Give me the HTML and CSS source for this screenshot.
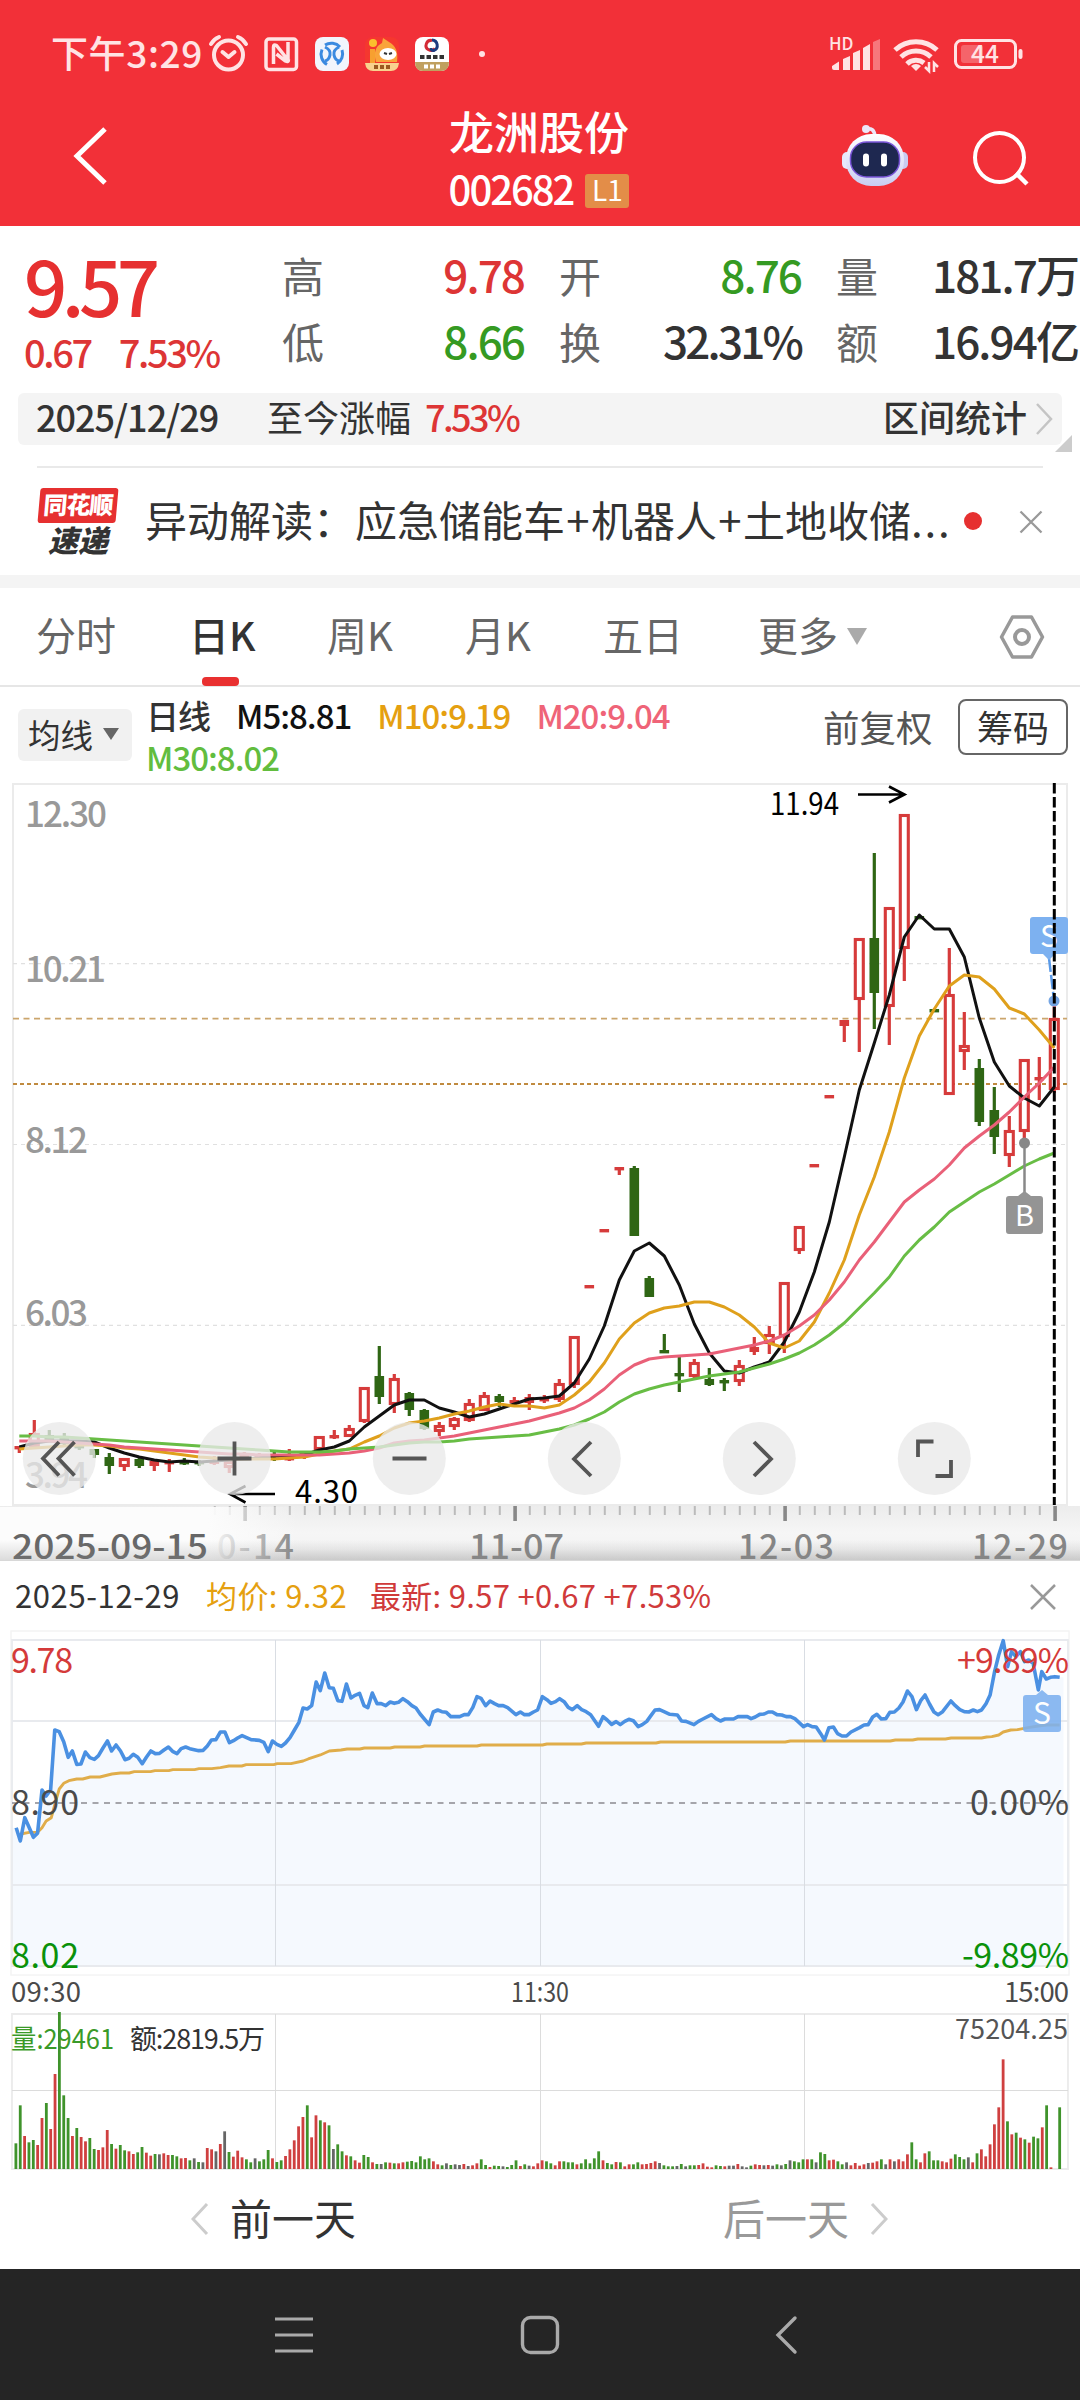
FILE: index.html
```
<!DOCTYPE html>
<html lang="zh-CN">
<head>
  <meta charset="UTF-8">
  <title>龙洲股份 002682</title>
  <link rel="stylesheet" href="styles.css">
</head>
<body>

  <header class="top">
    <div class="status">
      <span class="hora">下午3:29</span>
      <svg class="status-left" width="284" height="40" viewBox="206 34 284 40">
        <!-- alarma -->
        <g fill="none" stroke="#ffe3e4" stroke-width="4" stroke-linecap="round" stroke-linejoin="round">
          <circle cx="228.500" cy="55" r="14.500"/>
          <path d="M222.500 52l6 5 6-5M211 44q3-5 8-7M246 44q-3-5-8-7"/>
        </g>
        <!-- NFC -->
        <g fill="none" stroke="#ffe3e4" stroke-width="3.500" stroke-linejoin="round">
          <rect x="266" y="39" width="30.500" height="30.500" rx="3"/>
          <path d="M273.500 64V47q0-3 3-1.500L288 60V42M288.500 59.500q0 3-3 1.500l-9-7" />
        </g>
        <rect x="315" y="37" width="34" height="34" rx="8" fill="#f1f5fc"/>
        <g fill="none" stroke="#3a8ae0" stroke-width="3">
          <path d="M325 45a12 12 0 0 1 15 2M342 50a12 12 0 0 1-5 14M327 64.500a12 12 0 0 1-5-15"/>
          <path d="M325 47q6 3 5 8-1 5-5 6M339 47q-6 3-5 8 1 5 5 6"/>
        </g>
        <rect x="365" y="37" width="34" height="34" rx="8" fill="#f5372f"/>
        <path d="M376 62q-4-14 6-19l1-5 6 4q10 5 8 20z" fill="#f9a43a"/>
        <circle cx="373" cy="43" r="4" fill="#fbc02d"/>
        <path d="M370 49h5v14h-5z" fill="#f7a030"/>
        <ellipse cx="388" cy="54" rx="8.500" ry="6" fill="#fff"/>
        <path d="M384 53l3 1M392 53l-3 1" stroke="#333" stroke-width="2"/>
        <path d="M365 63h34q-1 8-8 8h-18q-7 0-8-8z" fill="#f8d28e"/>
        <path d="M374 67h16" stroke="#9a5a20" stroke-width="4" stroke-dasharray="4 2"/>
        <rect x="415" y="37" width="34" height="34" rx="8" fill="#fff"/>
        <path d="M415 62h34q0 9-8 9h-18q-8 0-8-9z" fill="#c0a060"/>
        <path d="M432 40.500a5 5 0 1 0 3 8" fill="none" stroke="#d42a35" stroke-width="3"/>
        <path d="M432 40a5.500 5.500 0 0 1 2 10.500q-3 .5-3-2.500" fill="none" stroke="#1c3b80" stroke-width="3"/>
        <path d="M420 57h24" stroke="#333" stroke-width="4" stroke-dasharray="4.500 2"/>
        <path d="M424 66.500h16" stroke="#fff" stroke-width="4" stroke-dasharray="4 2"/>
        <circle cx="482" cy="54" r="3" fill="#ffe3e4"/>
      </svg>
      <svg class="status-right" width="200" height="40" viewBox="826 34 200 40">
        <text x="829" y="50" font-size="17" font-weight="500" fill="#ffe3e4">HD</text>
        <g fill="#ffe3e4">
          <path d="M832 66l7-4.500v8.500h-5q-2 0-2-2zM843 59l7-3v14h-7zM853 53l7-3v20h-7zM863 48l7-4v26h-7z"/>
          <path d="M873 42l7-3v31h-7z" opacity=".4"/>
        </g>
        <g fill="none" stroke="#ffe3e4" stroke-width="5">
          <path d="M895 50a31 31 0 0 1 42 0M901 57a22 22 0 0 1 30 0M907 64a13 13 0 0 1 17-1"/>
        </g>
        <path d="M911 66q5-4 10 0l-5 5z" fill="#ffe3e4"/>
        <path d="M929 62v9l-4-4M934 72v-9l4 4" fill="none" stroke="#ffe3e4" stroke-width="2.500"/>
        <rect x="955.500" y="40.500" width="60" height="27" rx="6" fill="none" stroke="#ffe3e4" stroke-width="3"/>
        <rect x="961" y="45" width="22" height="18" rx="3" fill="#fff" opacity=".25"/>
        <path d="M1020.500 51v6" stroke="#ffe3e4" stroke-width="4" stroke-linecap="round"/>
        <text x="971" y="63" font-size="24.500" font-weight="500" fill="#ffe3e4">44</text>
      </svg>
    </div>

    <div class="navbar">
      <svg width="40" height="64" viewBox="0 0 40 64"><path d="M34 4L6 31l28 27" fill="none" stroke="#fff" stroke-width="5"/></svg>
      <div class="titulo">
        <h1>龙洲股份</h1>
        <div class="codigo"><span>002682</span><b>L1</b></div>
      </div>
      <div class="acciones">
        <svg width="68" height="64" viewBox="841 127 68 64">
          <defs>
            <linearGradient id="cabeza" x1="0" y1="0" x2="0" y2="1"><stop offset="0" stop-color="#fff"/><stop offset="1" stop-color="#c9cdf2"/></linearGradient>
          </defs>
          <path d="M866 131q8-2 9 7v5" fill="none" stroke="#ece6f8" stroke-width="3.500"/>
          <circle cx="866" cy="131" r="4" fill="#ece6f8"/>
          <rect x="842" y="154" width="12" height="17" rx="5" fill="#e6e8fb"/>
          <rect x="896" y="154" width="12" height="17" rx="5" fill="#c9ccf0"/>
          <rect x="846" y="136" width="58" height="52" rx="25" fill="url(#cabeza)"/>
          <rect x="850.500" y="144" width="49" height="35" rx="16" fill="#1e2850" stroke="#7a55d8" stroke-width="1.500"/>
          <path d="M866 158.500v7M884 158.500v7" stroke="#fff" stroke-width="6" stroke-linecap="round"/>
        </svg>
        <svg width="60" height="60" viewBox="971 128 60 60"><circle cx="999.500" cy="158.500" r="24.500" fill="none" stroke="#fff" stroke-width="4"/><path d="M1016 174l11 11" stroke="#fff" stroke-width="4.500"/></svg>
      </div>
    </div>
  </header>

  <section class="cotizacion">
    <div class="precio">
      <div class="actual">9.57</div>
      <div class="cambio"><span>0.67</span><span>7.53%</span></div>
    </div>
    <dl class="datos">
      <div><dt>高</dt><dd class="rojo">9.78</dd></div>
      <div><dt>开</dt><dd class="verde">8.76</dd></div>
      <div><dt>量</dt><dd>181.7万</dd></div>
      <div><dt>低</dt><dd class="verde">8.66</dd></div>
      <div><dt>换</dt><dd class="cambio-pct">32.31%</dd></div>
      <div><dt>额</dt><dd>16.94亿</dd></div>
    </dl>
  </section>

  <div class="rango">
    <span class="fecha">2025/12/29</span>
    <span class="desde">至今涨幅</span>
    <span class="pct">7.53%</span>
    <span class="stats">区间统计</span>
    <svg width="20" height="36" viewBox="0 0 20 36"><path d="M2 3l14 15L2 33" fill="none" stroke="#c4c4c4" stroke-width="2.500"/></svg>
    <i class="esquina"></i>
  </div>

  <div class="noticia">
    <div class="logo"><b>同花顺</b><em>速递</em></div>
    <p>异动解读：应急储能车<i>+</i>机器人<i>+</i>土地收储<u>...</u></p>
    <span class="punto"></span>
    <svg width="24" height="24" viewBox="0 0 24 24"><path d="M1.500 1.500l21 21M22.500 1.500l-21 21" stroke="#999" stroke-width="2.300"/></svg>
  </div>

  <nav class="tabs">
    <a>分时</a>
    <a class="activo">日K</a>
    <a>周K</a>
    <a>月K</a>
    <a>五日</a>
    <a class="mas">更多<i></i></a>
    <svg width="48" height="48" viewBox="0 0 48 48" fill="none" stroke="#999"><path d="M14.500 4h19L44.500 24 33.500 44h-19L3.500 24z" stroke-width="3.500" stroke-linejoin="round"/><circle cx="24" cy="24" r="7" stroke-width="4"/></svg>
  </nav>

  <div class="medias">
    <div class="selector">均线<i></i></div>
    <div class="valores">
      <span class="m0">日线</span><span class="m5">M5:8.81</span><span class="m10">M10:9.19</span><span class="m20">M20:9.04</span><span class="m30">M30:8.02</span>
    </div>
    <span class="ajuste">前复权</span>
    <button>筹码</button>
  </div>

  <svg class="grafica" width="1080" height="777" viewBox="0 783 1080 777">
    <defs>
      <linearGradient id="eje" x1="0" y1="0" x2="0" y2="1"><stop offset="0" stop-color="#ececec"/><stop offset=".5" stop-color="#f6f6f6"/><stop offset=".8" stop-color="#f3f3f3"/><stop offset="1" stop-color="#e4e4e4"/></linearGradient>
      <linearGradient id="velo"><stop offset="0" stop-color="#fcfcfc"/><stop offset=".3" stop-color="#fcfcfc" stop-opacity=".7"/><stop offset="1" stop-color="#fcfcfc" stop-opacity="0"/></linearGradient>
      <linearGradient id="sombra" x1="0" y1="0" x2="0" y2="1"><stop offset="0" stop-color="#888" stop-opacity="0"/><stop offset="1" stop-color="#888" stop-opacity=".28"/></linearGradient>
    </defs>
    <rect x="13" y="784" width="1054" height="721" fill="none" stroke="#ebebeb" stroke-width="2"/>
    <path d="M13 963.700H1067M13 1144.500H1067M13 1325.300H1067" stroke="#e0e0e0" stroke-width="1.200" stroke-dasharray="4 4"/>
    <path d="M13 1018.700H1067" stroke="#cba56c" stroke-width="1.800" stroke-dasharray="6 4.500"/>
    <path d="M13 1084H1067" stroke="#c08a3f" stroke-width="2" stroke-dasharray="4 3"/>
    <g class="precios">
      <text x="25" y="827" textLength="82">12.30</text>
      <text x="25" y="982" textLength="81">10.21</text>
      <text x="25" y="1153" textLength="63">8.12</text>
      <text x="25" y="1326" textLength="63">6.03</text>
      <text x="25" y="1488" textLength="63">3.94</text>
    </g>
    <g id="velas"></g>
    <g id="lineas" fill="none" stroke-width="3" stroke-linejoin="round"></g>

    <!-- maximo y minimo -->
    <g fill="none" stroke="#000" stroke-width="2.600">
      <path d="M858 794.500h46M889 786.500l15.500 8-15.500 8"/>
      <path d="M275 1494h-44M245.500 1486l-15.500 8 15.500 8.500"/>
    </g>
    <text class="marca" x="770" y="815" textLength="69" lengthAdjust="spacingAndGlyphs">11.94</text>
    <text class="marca" x="295" y="1502.500" textLength="63">4.30</text>

    <!-- venta y compra -->
    <path d="M1049 958l5 42" stroke="#5a9ae8" stroke-width="2.500" stroke-dasharray="14 3"/>
    <circle cx="1054" cy="1001" r="5.500" fill="#74a5e4"/>
    <path d="M1033 917h32q3 0 3 3v31q0 3-3 3h-10l-6 6-6-6h-10q-3 0-3-3v-31q0-3 3-3z" fill="#7db1f0"/>
    <text x="1049" y="947" font-size="30" fill="#fff" text-anchor="middle">S</text>
    <path d="M1024.500 1143v52" stroke="#888" stroke-width="2.500"/>
    <circle cx="1024.500" cy="1143" r="5.500" fill="#888"/>
    <path d="M1009 1196h9l6.500-5 6.500 5h9q3 0 3 3v32q0 3-3 3h-31q-3 0-3-3v-32q0-3 3-3z" fill="#949494"/>
    <text x="1024.500" y="1225.500" font-size="29" fill="#fff" text-anchor="middle">B</text>
    <path d="M1054.300 783V1505" stroke="#000" stroke-width="3" stroke-dasharray="10.500 3.500"/>

    <!-- botones -->
    <g fill="#e9e9e9" fill-opacity=".78">
      <circle cx="59.300" cy="1458.500" r="36.500"/><circle cx="234.300" cy="1458.500" r="36.500"/><circle cx="409.300" cy="1458.500" r="36.500"/>
      <circle cx="584.300" cy="1458.500" r="36.500"/><circle cx="759.300" cy="1458.500" r="36.500"/><circle cx="934.300" cy="1458.500" r="36.500"/>
    </g>
    <g fill="none" stroke="#555" stroke-width="3.800">
      <path d="M59 1442l-16 16.500 16 17M74.500 1442l-16 16.500 16 17"/>
      <path d="M217.500 1458.500h34M234.500 1441.500v34M392.500 1458.500h34"/>
      <path d="M591 1442l-17 17 17 17M754 1442l17 17-17 17"/>
      <path d="M918 1457v-15.500h15.500M951 1460v16h-15.500"/>
    </g>

    <!-- eje de fechas -->
    <rect x="0" y="1506" width="1080" height="54" fill="url(#eje)"/>
    <g id="ticks"></g>
    <g class="fechas">
      <text x="217" y="1559" textLength="77">0-14</text>
      <text x="469" y="1559" textLength="95" lengthAdjust="spacingAndGlyphs">11-07</text>
      <text x="738" y="1559" textLength="96">12-03</text>
      <text x="972" y="1559" textLength="96">12-29</text>
    </g>
    <rect x="0" y="1507" width="208" height="53" fill="#fcfcfc"/>
    <rect x="208" y="1507" width="90" height="53" fill="url(#velo)"/>
    <text class="inicio" x="12" y="1559" textLength="196" lengthAdjust="spacingAndGlyphs">2025-09-15</text>
    <rect x="0" y="1540" width="1080" height="20" fill="url(#sombra)"/>
  </svg>

  <section class="dia">
    <div class="dia-top">
      <span class="d1">2025-12-29</span>
      <span class="d2">均价: 9.32</span>
      <span class="d3">最新: 9.57 +0.67 +7.53%</span>
      <svg width="26" height="26" viewBox="0 0 26 26"><path d="M1 1l24 24M25 1L1 25" stroke="#999" stroke-width="2.500"/></svg>
    </div>
    <svg class="minutos" width="1080" height="549" viewBox="0 1630 1080 549">
      <g fill="none" stroke="#f4f4f4" stroke-width="1.500"><rect x="11" y="1631" width="1058" height="344"/></g>
      <g transform="translate(0 1560) scale(.34439 .33333)">
        <path id="area" fill="#f5f9fe"/>
      </g>
      <g fill="none" stroke="#e8eaee" stroke-width="1.800">
        <path d="M12 1640H1068V1966H12zM12 1721H1068M12 1885H1068"/>
      </g>
      <path d="M275.500 1640V1966M540.500 1640V1966M804.500 1640V1966" stroke="#d9dde3" stroke-width="1"/>
      <path d="M12 1803H1068" stroke="#a5a5ab" stroke-width="1.800" stroke-dasharray="6 5.500"/>
      <g transform="translate(0 1560) scale(.34439 .33333)" fill="none" stroke-linejoin="round">
        <polyline id="media" stroke="#e0ad4a" stroke-width="2.900" vector-effect="non-scaling-stroke"/>
        <polyline id="precio" stroke="#4a90e2" stroke-width="3.600" vector-effect="non-scaling-stroke"/>
      </g>
      <g class="escala">
        <text x="11" y="1673" fill="#d43a3a" textLength="62">9.78</text>
        <text x="11" y="1815" fill="#4a4a4a" textLength="68">8.90</text>
        <text x="11" y="1968" fill="#0a910a" textLength="68">8.02</text>
        <text x="957" y="1673" fill="#d43a3a" textLength="112">+9.89%</text>
        <text x="970" y="1815" fill="#4a4a4a" textLength="99">0.00%</text>
        <text x="962" y="1968" fill="#0a910a" textLength="107">-9.89%</text>
      </g>
      <g opacity=".88">
        <path d="M1026 1695h10l6-5 6 5h10q3 0 3 3v31q0 3-3 3h-32q-3 0-3-3v-31q0-3 3-3z" fill="#7db1f0"/>
        <text x="1042" y="1724" font-size="30" fill="#fff" text-anchor="middle">S</text>
      </g>
      <g class="horas">
        <text x="11" y="2002" textLength="70">09:30</text>
        <text x="511" y="2002" textLength="58" lengthAdjust="spacingAndGlyphs">11:30</text>
        <text x="1004" y="2002" textLength="65">15:00</text>
      </g>
      <path d="M12 2014H1068V2169H12z" fill="none" stroke="#ebebeb" stroke-width="1.800"/>
      <path d="M12 2090.500H1068M275.500 2014V2169M540.500 2014V2169M804.500 2014V2169" stroke="#dcdcdc" stroke-width="1"/>
      <text x="11" y="2049" font-size="27" fill="#3a9a28" textLength="103" lengthAdjust="spacingAndGlyphs">量:29461</text>
      <text x="130" y="2049" font-size="27" fill="#333" textLength="135">额:2819.5万</text>
      <text x="955" y="2039" font-size="27" fill="#555" textLength="113">75204.25</text>
      <g id="volumen"></g>
    </svg>
    <div class="dia-nav">
      <a class="prev"><svg width="18" height="34" viewBox="0 0 18 34"><path d="M16 2L2 17l14 15" fill="none" stroke="#ccc" stroke-width="3"/></svg>前一天</a>
      <a class="next">后一天<svg width="18" height="34" viewBox="0 0 18 34"><path d="M2 2l14 15L2 32" fill="none" stroke="#ccc" stroke-width="3"/></svg></a>
    </div>
  </section>

  <footer class="sistema">
    <svg width="40" height="40" viewBox="0 0 40 40"><path d="M1 4h38M1 20h38M1 36h38" stroke="#aaa" stroke-width="3"/></svg>
    <svg width="40" height="40" viewBox="0 0 40 40"><rect x="2.500" y="2.500" width="35" height="35" rx="8" fill="none" stroke="#aaa" stroke-width="3.400"/></svg>
    <svg width="40" height="40" viewBox="0 0 40 40"><path d="M29 3L12 20l17 17" fill="none" stroke="#aaa" stroke-width="3.400" stroke-linecap="round"/></svg>
  </footer>

  <script src="script.js"></script>
</body>
</html>
```

FILE: styles.css
```
* {
  box-sizing: border-box;
}
body {
  margin: 0;
  width: 1080px;
  height: 2400px;
  overflow: hidden;
  background: #fff;
  color: #333;
  font-family: "Noto Sans CJK SC", sans-serif;
}
svg {
  display: block;
  flex: none;
}

/* cabecera */
.top {
  height: 226px;
  background: #f23038;
  color: #fff;
}
.status {
  display: flex;
  align-items: center;
  height: 96px;
  padding: 12px 54px 0 51px;
}
.hora {
  width: 155px;
  font-size: 37px;
  line-height: 54px;
  margin-top: -5px;
  letter-spacing: 0.6px;
  color: #ffe3e4;
  white-space: nowrap;
  font-weight: 500;
}
.status-right {
  margin-left: auto;
}
.navbar {
  display: grid;
  grid-template-columns: 1fr 200px 1fr;
  height: 122px;
  padding: 0 49px 0 71px;
  align-items: center;
}
.titulo {
  width: 200px;
  margin-left: -12px;
  padding-top: 1px;
  text-align: center;
}
h1 {
  margin: 0;
  font-size: 45px;
  line-height: 66px;
  font-weight: 500;
}
.codigo {
  display: flex;
  justify-content: center;
  align-items: center;
  gap: 12px;
  height: 54px;
}
.codigo span {
  font-size: 40px;
  line-height: 58px;
  font-weight: 500;
  letter-spacing: -2px;
  margin-top: -5px;
}
.codigo b {
  width: 44px;
  height: 34px;
  border-radius: 3px;
  background: #e38d48;
  font-size: 28px;
  line-height: 30px;
  font-weight: 400;
}
.acciones {
  display: flex;
  justify-content: flex-end;
  gap: 62px;
}
.acciones svg + svg {
  margin-top: 2px;
}

/* cotizacion */
.cotizacion {
  display: flex;
  height: 167px;
  padding: 17px 2px 0 24px;
}
.precio {
  width: 258px;
  color: #e63030;
}
.actual {
  height: 82px;
  font-size: 76px;
  line-height: 82px;
  font-weight: 500;
  letter-spacing: -5.5px;
}
.cambio {
  display: flex;
  gap: 28px;
  font-size: 38px;
  line-height: 54px;
  margin-top: 0;
  letter-spacing: -2.4px;
  font-weight: 500;
  color: #dd3535;
}
.datos {
  display: grid;
  grid-template-columns: 242px 242px 242px;
  grid-auto-rows: 66px;
  column-gap: 35px;
  margin: 0;
}
.datos div {
  display: flex;
  justify-content: space-between;
  line-height: 63px;
}
dt {
  font-size: 42px;
  color: #666;
}
dd {
  margin: 0;
  font-size: 44px;
  font-weight: 500;
  letter-spacing: -1.9px;
}
.cambio-pct {
  letter-spacing: -2.8px;
}
.rojo {
  color: #dd3535;
}
.verde {
  color: #359a22;
}

.rango {
  position: relative;
  display: flex;
  align-items: center;
  height: 52px;
  margin: 0 18px;
  padding: 0 7px 0 18px;
  background: #f4f4f4;
  border-radius: 6px;
  font-size: 36px;
  line-height: 52px;
}
.rango span {
  margin-top: -6px;
}
.fecha {
  width: 231px;
  letter-spacing: -1px;
  font-weight: 500;
}
.rango .pct {
  margin-left: 14px;
  color: #dd3535;
  letter-spacing: -2.6px;
  font-weight: 500;
}
.stats {
  margin-left: auto;
  margin-right: 8px;
  font-weight: 500;
}
.esquina {
  position: absolute;
  right: -10px;
  bottom: -7px;
  border-left: 17px solid transparent;
  border-bottom: 17px solid #ccc;
}

/* noticia */
.noticia {
  display: flex;
  align-items: center;
  height: 109px;
  margin: 21px 37px 0;
  border-top: 2px solid #e9e9e9;
}
.logo {
  width: 82px;
  height: 68px;
  text-align: center;
}
.logo b {
  display: block;
  width: 78px;
  height: 35px;
  margin-left: 2px;
  background: #e63030;
  border-radius: 3px;
  color: #fff;
  font-size: 24px;
  line-height: 31px;
  font-weight: 900;
  letter-spacing: -1px;
  transform: skewX(-5deg);
}
.logo em {
  display: block;
  font-size: 30px;
  line-height: 33px;
  font-weight: 900;
}
.noticia p {
  margin: -5px 0 0 26px;
  width: 808px;
  font-size: 42px;
  line-height: 62px;
  white-space: nowrap;
}
.noticia p i {
  font-style: normal;
  display: inline-block;
  width: 26px;
  text-align: center;
}
.noticia p u {
  text-decoration: none;
  letter-spacing: 1.8px;
}
.punto {
  width: 18px;
  height: 18px;
  margin: -1px 37px 0 12px;
  border-radius: 50%;
  background: #e63030;
  flex: none;
}

/* pestañas */
.tabs {
  display: flex;
  align-items: center;
  height: 112px;
  border-top: 13px solid #f4f4f4;
  border-bottom: 2px solid #e6e6e6;
  padding: 0 34px 0 36px;
  font-size: 40px;
  color: #666;
}
.tabs a {
  position: relative;
  width: 138px;
  line-height: 60px;
  margin-top: -6px;
}
.tabs a:first-child {
  width: 153px;
}
.tabs a:nth-child(5) {
  width: 155px;
}
.tabs .mas {
  flex: 1;
}
.mas i {
  display: inline-block;
  margin: 0 0 6px 9px;
  border: 10px solid transparent;
  border-top: 17px solid #aaa;
  border-bottom: 0;
}
.tabs .activo {
  color: #333;
  font-weight: 500;
}
.activo::after {
  content: "";
  position: absolute;
  left: 13px;
  bottom: -22px;
  width: 37px;
  height: 9px;
  border-radius: 4px;
  background: #e93030;
}
.tabs svg {
  margin-top: 1px;
}

/* medias moviles */
.medias {
  display: flex;
  height: 96px;
  padding: 12px 12px 0 18px;
}
.selector {
  display: flex;
  align-items: center;
  gap: 10px;
  width: 114px;
  height: 52px;
  margin-top: 10px;
  padding: 0 0 3px 10px;
  background: #f1f1f1;
  border-radius: 6px;
  font-size: 32.500px;
  line-height: 48px;
}
.selector i {
  border: 8px solid transparent;
  border-top: 12px solid #666;
  border-bottom: 0;
}
.valores {
  display: flex;
  flex-wrap: wrap;
  width: 672px;
  padding: 0 90px 0 14px;
  font-size: 33px;
  line-height: 42px;
  height: 84px;
  margin-top: -5px;
  font-weight: 500;
  letter-spacing: -1px;
}
.valores span {
  margin-right: 26px;
}
.m5 {
  color: #111;
}
.m10 {
  color: #e5a010;
}
.m20 {
  color: #ef6478;
}
.m30 {
  color: #62bd3e;
}
.ajuste {
  margin: 2px 0 0 19px;
  width: 120px;
  font-size: 36.500px;
  line-height: 52px;
  color: #555;
}
.medias button {
  margin-left: auto;
  width: 110px;
  height: 56px;
  margin-top: 0;
  padding: 0 0 5px;
  border: 2px solid #666;
  border-radius: 8px;
  background: #fff;
  color: #333;
  font: 36px/50px "Noto Sans CJK SC", sans-serif;
}

/* grafica K */
.grafica {
  height: 777px;
}
.precios text {
  font-size: 35px;
  font-weight: 500;
  fill: #999;
}
.marca {
  font-size: 31px;
}
.fechas text {
  font-size: 34px;
  fill: #858585;
  font-weight: 500;
}
.inicio {
  font-size: 34px;
  font-weight: 500;
  fill: #666;
}

/* hoja del dia */
.dia {
  height: 709px;
  background: #fff;
  border-top: 1px solid #d8d8d8;
}
.dia-top {
  display: flex;
  align-items: center;
  height: 69px;
  padding: 3px 24px 0 15px;
  font-size: 31px;
  line-height: 46px;
}
.dia-top span {
  margin-top: -5px;
  white-space: nowrap;
}
.d1 {
  width: 191px;
  letter-spacing: 0.6px;
}
.d2 {
  width: 164px;
  color: #e5a010;
  letter-spacing: 0.4px;
}
.d3 {
  color: #d03a3a;
  letter-spacing: 0.3px;
}
.dia-top svg {
  margin-left: auto;
}
.escala text {
  font-size: 34px;
}
.horas text {
  font-size: 27.500px;
  fill: #4a4a4a;
}
.dia-nav {
  display: flex;
  align-items: center;
  height: 84px;
  padding-left: 191px;
  font-size: 42px;
  line-height: 62px;
}
.dia-nav a {
  display: flex;
  align-items: center;
  gap: 21px;
  padding-bottom: 9px;
}
.prev {
  width: 532px;
}
.next {
  color: #999;
}
.dia-nav svg {
  margin-top: 5px;
}

.sistema {
  display: flex;
  justify-content: center;
  align-items: center;
  gap: 206px;
  height: 131px;
  padding-right: 1px;
  background: #252525;
}
```

FILE: script.js
```
const NS = "http://www.w3.org/2000/svg";
const ROJO = "#d63b3b";
const VERDE = "#2f6614";

function agregar(padre, tipo, attrs) {
  const el = document.createElementNS(NS, tipo);
  for (const k in attrs) el.setAttribute(k, attrs[k]);
  document.getElementById(padre).appendChild(el);
}

const xVela = i => 19.3 + 15 * i;

// color, cuerpo arriba, cuerpo abajo, mecha arriba, mecha abajo
const velas = [
  ["r",1446,1448,1446,1453],["r",1433,1447,1420,1447],["g",1435,1440,1430,1442],["g",1436,1444,1433,1445],["g",1445,1448,1444,1450],
  ["g",1449,1455,1449,1458],["g",1457,1466,1453,1474],["r",1458,1467,1458,1471],["g",1459,1466,1458,1468],["r",1461,1466,1461,1471],
  ["r",1461,1463,1459,1472],["g",1461,1463,1458,1465],["g",1461,1464,1460,1466],["r",1460,1464,1456,1465],["r",1461,1468,1461,1473],
  ["r",1454,1458,1452,1459],["r",1455,1458,1453,1459],["g",1454,1456,1450,1461],["r",1457,1459,1449,1461],["r",1451,1457,1451,1459],
  ["r",1436,1450,1436,1450],["r",1435,1438,1430,1439],["r",1428,1437,1425,1437],["r",1387,1422,1387,1423],["g",1376,1397,1346,1404],
  ["r",1378,1405,1374,1413],["g",1393,1410,1392,1416],["g",1410,1429,1409,1430],["r",1425,1432,1422,1436],["r",1418,1427,1417,1430],
  ["r",1403,1421,1399,1422],["r",1395,1411,1392,1411],["g",1396,1402,1394,1407],["r",1400,1403,1397,1405],["r",1397,1403,1394,1410],
  ["r",1398,1400,1395,1403],["r",1383,1400,1379,1402],["r",1336,1385,1336,1388],["r",1285,1288,1285,1288],["r",1229,1232,1229,1232],
  ["r",1167,1169,1167,1175],["g",1168,1236,1166,1236],["g",1278,1297,1276,1297],["g",1350,1352,1334,1352],["g",1373,1375,1357,1392],
  ["r",1362,1377,1359,1380],["g",1379,1385,1368,1386],["g",1380,1382,1378,1391],["r",1365,1382,1360,1386],["r",1347,1352,1337,1355],
  ["r",1334,1344,1326,1354],["r",1282,1337,1282,1353],["r",1226,1251,1226,1254],["r",1164,1167,1164,1167],["r",1095,1098,1095,1098],
  ["r",1020,1026,1020,1042],["r",938,1000,938,1052],["g",938,993,853,1029],["r",907,1007,907,1045],["r",814,949,814,981],
  ["g",916,918,916,918],["g",1009,1011,1009,1011],["r",994,1095,948,1095],["r",1045,1052,1012,1070],["g",1068,1122,1059,1126],
  ["g",1110,1137,1087,1154],["r",1130,1156,1116,1167],["r",1059,1132,1059,1143],["r",1077,1079,1057,1100],["r",1018,1090,1003,1093]
];

velas.forEach(([c, a, b, ma, mb], i) => {
  const x = xVela(i);
  const color = c === "r" ? ROJO : VERDE;
  if (ma < a) agregar("velas", "rect", { x: x - 1.6, y: ma, width: 3.2, height: a - ma, fill: color });
  if (mb > b) agregar("velas", "rect", { x: x - 1.6, y: b, width: 3.2, height: mb - b, fill: color });
  if (c === "r" && b - a > 6) {
    agregar("velas", "rect", { x: x - 4, y: a + 1.5, width: 8, height: b - a - 3, fill: "#fff", stroke: color, "stroke-width": 3.1 });
  } else {
    agregar("velas", "rect", { x: x - 4.8, y: a, width: 9.6, height: Math.max(b - a, 3.4), fill: color });
  }
});

const ma = {
  "#111": [1447,1443,1441,1441,1441,1442,1448,1453,1457,1460,1462,1461,1462,1461,1460,1459,1458,1456,1456,1455,1450,1447,1441,1427,1416,1405,1400,1400,1408,1412,1417,1414,1409,1404,1399,1398,1396,1383,1359,1326,1280,1251,1243,1256,1285,1324,1353,1371,1373,1367,1362,1342,1312,1272,1222,1157,1090,1043,995,937,915,929,929,957,1018,1062,1086,1098,1106,1087],
  "#dfa01c": [1449,1448,1447,1446,1445,1445,1446,1448,1449,1451,1453,1455,1457,1458,1459,1459,1459,1459,1458,1457,1454,1451,1449,1442,1436,1428,1423,1421,1418,1414,1411,1407,1404,1406,1406,1408,1405,1395,1382,1363,1339,1323,1313,1308,1306,1302,1302,1307,1315,1327,1343,1348,1341,1322,1293,1260,1215,1177,1132,1078,1036,1009,986,975,977,989,1008,1014,1030,1048],
  "#e96078": [1441,1441,1441,1442,1443,1444,1445,1447,1448,1449,1450,1451,1452,1453,1454,1454,1455,1455,1455,1455,1455,1454,1453,1451,1448,1443,1441,1440,1438,1436,1433,1430,1427,1424,1421,1417,1413,1408,1400,1389,1375,1365,1359,1357,1356,1355,1354,1351,1348,1345,1341,1335,1326,1315,1300,1282,1260,1242,1222,1202,1190,1179,1165,1148,1136,1125,1112,1097,1083,1067],
  "#68bd45": [1436,1436,1437,1437,1438,1439,1440,1441,1442,1443,1444,1445,1446,1447,1448,1449,1450,1451,1452,1452,1452,1451,1449,1448,1447,1445,1443,1442,1442,1441,1439,1438,1437,1436,1435,1432,1429,1425,1419,1412,1402,1394,1389,1385,1382,1379,1376,1374,1372,1368,1364,1359,1353,1345,1335,1323,1308,1293,1277,1256,1240,1227,1212,1202,1192,1184,1175,1166,1159,1153]
};
for (const color in ma) {
  agregar("lineas", "polyline", { points: ma[color].map((y, i) => xVela(i) + "," + y).join(" "), stroke: color });
}

for (let i = 13; i < 70; i++) {
  const mayor = (i - 15) % 18 === 0;
  agregar("ticks", "rect", { x: xVela(i) - (mayor ? 1 : 0.5), y: 1506, width: mayor ? 3.6 : 2, height: mayor ? 15 : 9, fill: mayor ? "#888" : "#bbb" });
}

// precio por minuto
const precio = "47,803 59,843 72,773 85,803 97,832 109,820 122,690 134,708 147,690 159,510 172,515 185,545 198,592 210,573 223,613 235,612 248,576 261,593 274,598 286,587 299,564 312,543 324,573 337,555 350,573 363,599 375,595 387,583 400,592 413,611 425,592 438,573 451,581 463,580 476,570 489,561 501,574 514,581 526,566 539,561 551,566 577,572 590,571 602,558 614,540 627,539 640,516 653,516 666,548 678,542 690,534 703,527 716,533 729,539 753,541 766,547 779,575 791,543 804,553 817,559 829,549 842,533 855,510 868,487 880,444 892,447 905,437 918,366 930,392 943,339 956,383 968,385 981,422 993,424 1006,372 1019,414 1031,406 1044,400 1057,437 1068,443 1081,399 1095,431 1107,431 1120,437 1133,426 1145,430 1157,427 1170,416 1183,425 1196,437 1208,444 1220,462 1246,494 1258,456 1271,450 1283,455 1296,457 1309,470 1335,470 1348,464 1360,464 1373,442 1385,410 1397,415 1410,437 1423,423 1436,431 1448,437 1461,437 1474,443 1498,464 1511,456 1523,464 1536,464 1549,456 1561,450 1575,410 1588,419 1600,430 1613,425 1625,416 1638,425 1650,442 1662,449 1676,437 1689,449 1702,455 1715,464 1738,499 1751,470 1763,480 1776,493 1789,485 1801,494 1814,484 1826,478 1839,482 1853,500 1865,494 1878,484 1890,467 1902,450 1915,449 1928,455 1945,463 1967,465 1979,483 1992,484 2015,494 2028,484 2041,477 2066,464 2079,476 2092,483 2105,477 2130,477 2143,470 2170,470 2181,476 2193,471 2206,463 2219,462 2231,456 2243,456 2256,464 2270,465 2283,470 2295,470 2308,476 2333,500 2345,494 2358,500 2370,501 2383,521 2394,540 2407,503 2420,501 2432,521 2445,528 2458,528 2471,516 2496,503 2509,495 2521,494 2534,471 2546,463 2559,477 2572,476 2584,457 2597,456 2610,444 2622,426 2635,393 2648,410 2661,449 2674,421 2686,405 2699,432 2712,456 2724,464 2737,455 2761,423 2774,437 2787,449 2800,455 2813,456 2826,450 2838,455 2850,450 2863,431 2875,405 2888,335 2900,285 2913,242 2926,320 2937,275 2950,290 2963,275 2975,305 2987,300 3000,310 3015,390 3025,335 3038,357 3050,352 3063,350 3077,352";
const media = "60,822 85,817 109,817 122,803 134,783 149,773 160,730 172,687 185,670 200,662 223,657 240,657 262,651 290,651 325,642 350,639 375,639 390,635 437,635 450,632 490,632 502,629 565,629 578,626 615,626 640,623 665,618 702,618 715,614 795,614 805,611 845,611 880,603 895,597 930,585 956,573 990,570 1008,567 1045,567 1058,564 1133,564 1146,561 1220,561 1233,558 1385,558 1398,555 1575,555 1588,552 1688,552 1702,549 1905,549 1918,546 2280,546 2295,543 2585,543 2600,540 2650,540 2665,537 2745,537 2762,534 2850,534 2865,531 2880,530 2900,525 2913,516 2935,510 2955,509 2985,503 3015,498 3040,495 3077,495";
document.getElementById("precio").setAttribute("points", precio);
document.getElementById("media").setAttribute("points", media);
document.getElementById("area").setAttribute("d", "M36,1218 L36,803 L" + precio + " L3088,352 L3088,1218 Z");

// volumen por minuto: color + altura
const volumen = "g77 g191 r99 g80 g87 r72 r153 g198 r120 r285 g471 g221 g153 r99 g123 r96 r83 g93 g60 r57 r65 r117 g75 r61 g72 g56 r53 r45 g50 g66 r49 r40 g45 k44 r47 r42 g42 g38 r32 r33 g26 k32 g21 k20 r63 r59 k53 r75 k113 g51 r37 r55 r35 g29 g20 k32 g23 g29 g57 r32 g21 g26 r39 r59 r86 r128 r156 g191 r95 r161 g146 r140 g131 k60 g74 g53 r41 g38 r26 r19 g42 g36 r20 g15 k15 g20 r19 g17 r17 r20 g22 g24 g20 g38 g29 g32 r23 r14 g11 k17 g12 k14 k12 r15 k9 r11 r17 g29 g12 r6 g10 g9 k8 g6 g12 g26 r9 g14 k10 r8 r17 r26 g23 g17 r11 r23 g23 g20 g20 r14 g17 g29 g17 g32 g53 r26 g18 g14 r21 g20 r8 r14 g14 g20 r14 r15 r18 r23 k18 g11 g8 g8 k9 g15 k8 g11 g11 r12 r17 r7 r5 g11 g9 r8 k10 k10 r15 k8 k5 g10 r14 r12 k11 r12 k10 g14 k11 g15 k26 g23 g20 g29 r29 g29 k20 g50 g45 r26 r28 g23 g14 k20 r11 r18 r10 r14 k18 r19 r23 g29 k14 r29 k23 r29 r23 r44 g80 g29 r20 r47 g53 g26 g26 r23 r20 r31 g44 g36 g29 k35 r20 g47 r59 r38 r74 r134 r185 r329 g143 r104 g109 r94 g89 r79 g97 g92 r125 g191 r5 g0 g185".split(" ");
const tonos = { r: "#cf4040", g: "#3f932b", k: "#666" };
volumen.forEach((v, i) => {
  const h = v.slice(1) / 3;
  agregar("volumen", "rect", { x: 14.5 + 4.349 * i, y: 2169 - h, width: 2.8, height: h, fill: tonos[v[0]] });
});
```
